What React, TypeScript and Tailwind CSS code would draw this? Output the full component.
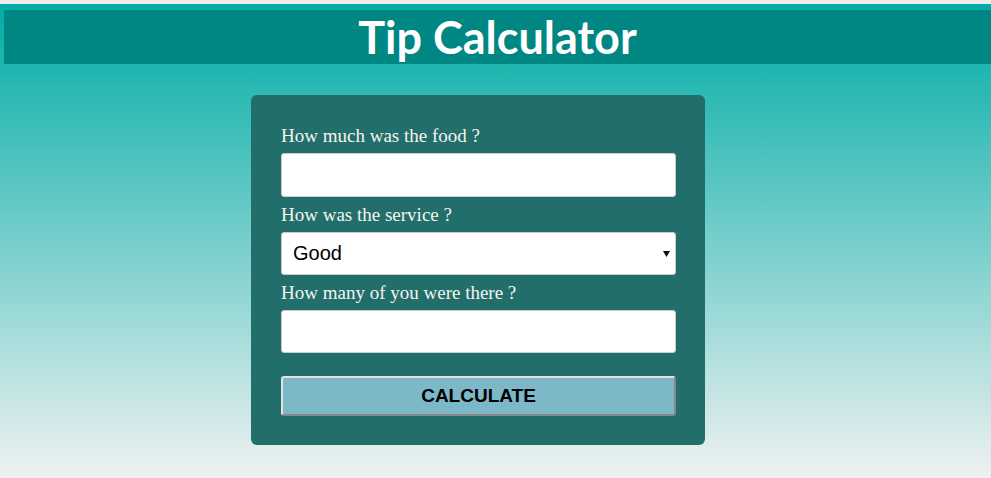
export default function App() {
  return (
    <div className="min-h-[478px] w-full bg-[#ececec] pt-1">
      <div className="min-h-[474px] bg-linear-to-b/srgb from-[#00aca6] to-[#eef1f1] pt-[6px]">
        {/* Header */}
        <div className="ml-1 flex h-[54px] items-center justify-center bg-[#008784]">
          <h1 className="font-['Lato',sans-serif] text-[45px] font-bold leading-none text-white">Tip Calculator</h1>
        </div>

        {/* Card */}
        <div className="ml-[251px] mt-[31px] w-[454px] rounded-md bg-[#226e6b] pb-[29px] pl-[30px] pr-[29px] pt-[30px]">
          <form className="flex flex-col font-['Liberation_Serif',serif]" onSubmit={(e) => e.preventDefault()}>
            <label className="mb-[6px] text-[19px] leading-[22px] text-[#f4f4ee]">How much was the food ?</label>
            <input
              type="text"
              className="h-[44px] w-full rounded-[3px] border border-[#cccccc] bg-white px-3 text-[20px] font-['Liberation_Sans',sans-serif] outline-none"
            />

            <label className="mb-[6px] mt-[7px] text-[19px] leading-[22px] text-[#f4f4ee]">How was the service ?</label>
            <div className="relative">
              <select
                defaultValue="good"
                className="h-[43px] w-full appearance-none rounded-[3px] border border-[#cccccc] bg-white pb-[2px] pl-[11px] font-['Liberation_Sans',sans-serif] text-[20px] text-black outline-none"
              >
                <option value="great">Great</option>
                <option value="good">Good</option>
                <option value="ok">OK</option>
                <option value="bad">Bad</option>
              </select>
              <svg className="pointer-events-none absolute right-[6px] top-[19px] h-[6px] w-[7px]" viewBox="0 0 7 6">
                <path d="M0 0h7L3.5 6z" fill="#111" />
              </svg>
            </div>

            <label className="mb-[6px] mt-[7px] text-[19px] leading-[21px] text-[#f4f4ee]">How many of you were there ?</label>
            <input
              type="text"
              className="mt-px h-[43px] w-full rounded-[3px] border border-[#cccccc] bg-white px-3 text-[20px] font-['Liberation_Sans',sans-serif] outline-none"
            />

            <button
              type="submit"
              className="mt-[23px] h-[40px] w-full rounded-[3px] border-2 border-b-[#878787] border-l-[#e2e2e2] border-r-[#878787] border-t-[#e2e2e2] bg-[#7db8c8] font-['Liberation_Sans',sans-serif] text-[19px] font-bold text-black"
            >
              CALCULATE
            </button>
          </form>
        </div>
      </div>
    </div>
  );
}
